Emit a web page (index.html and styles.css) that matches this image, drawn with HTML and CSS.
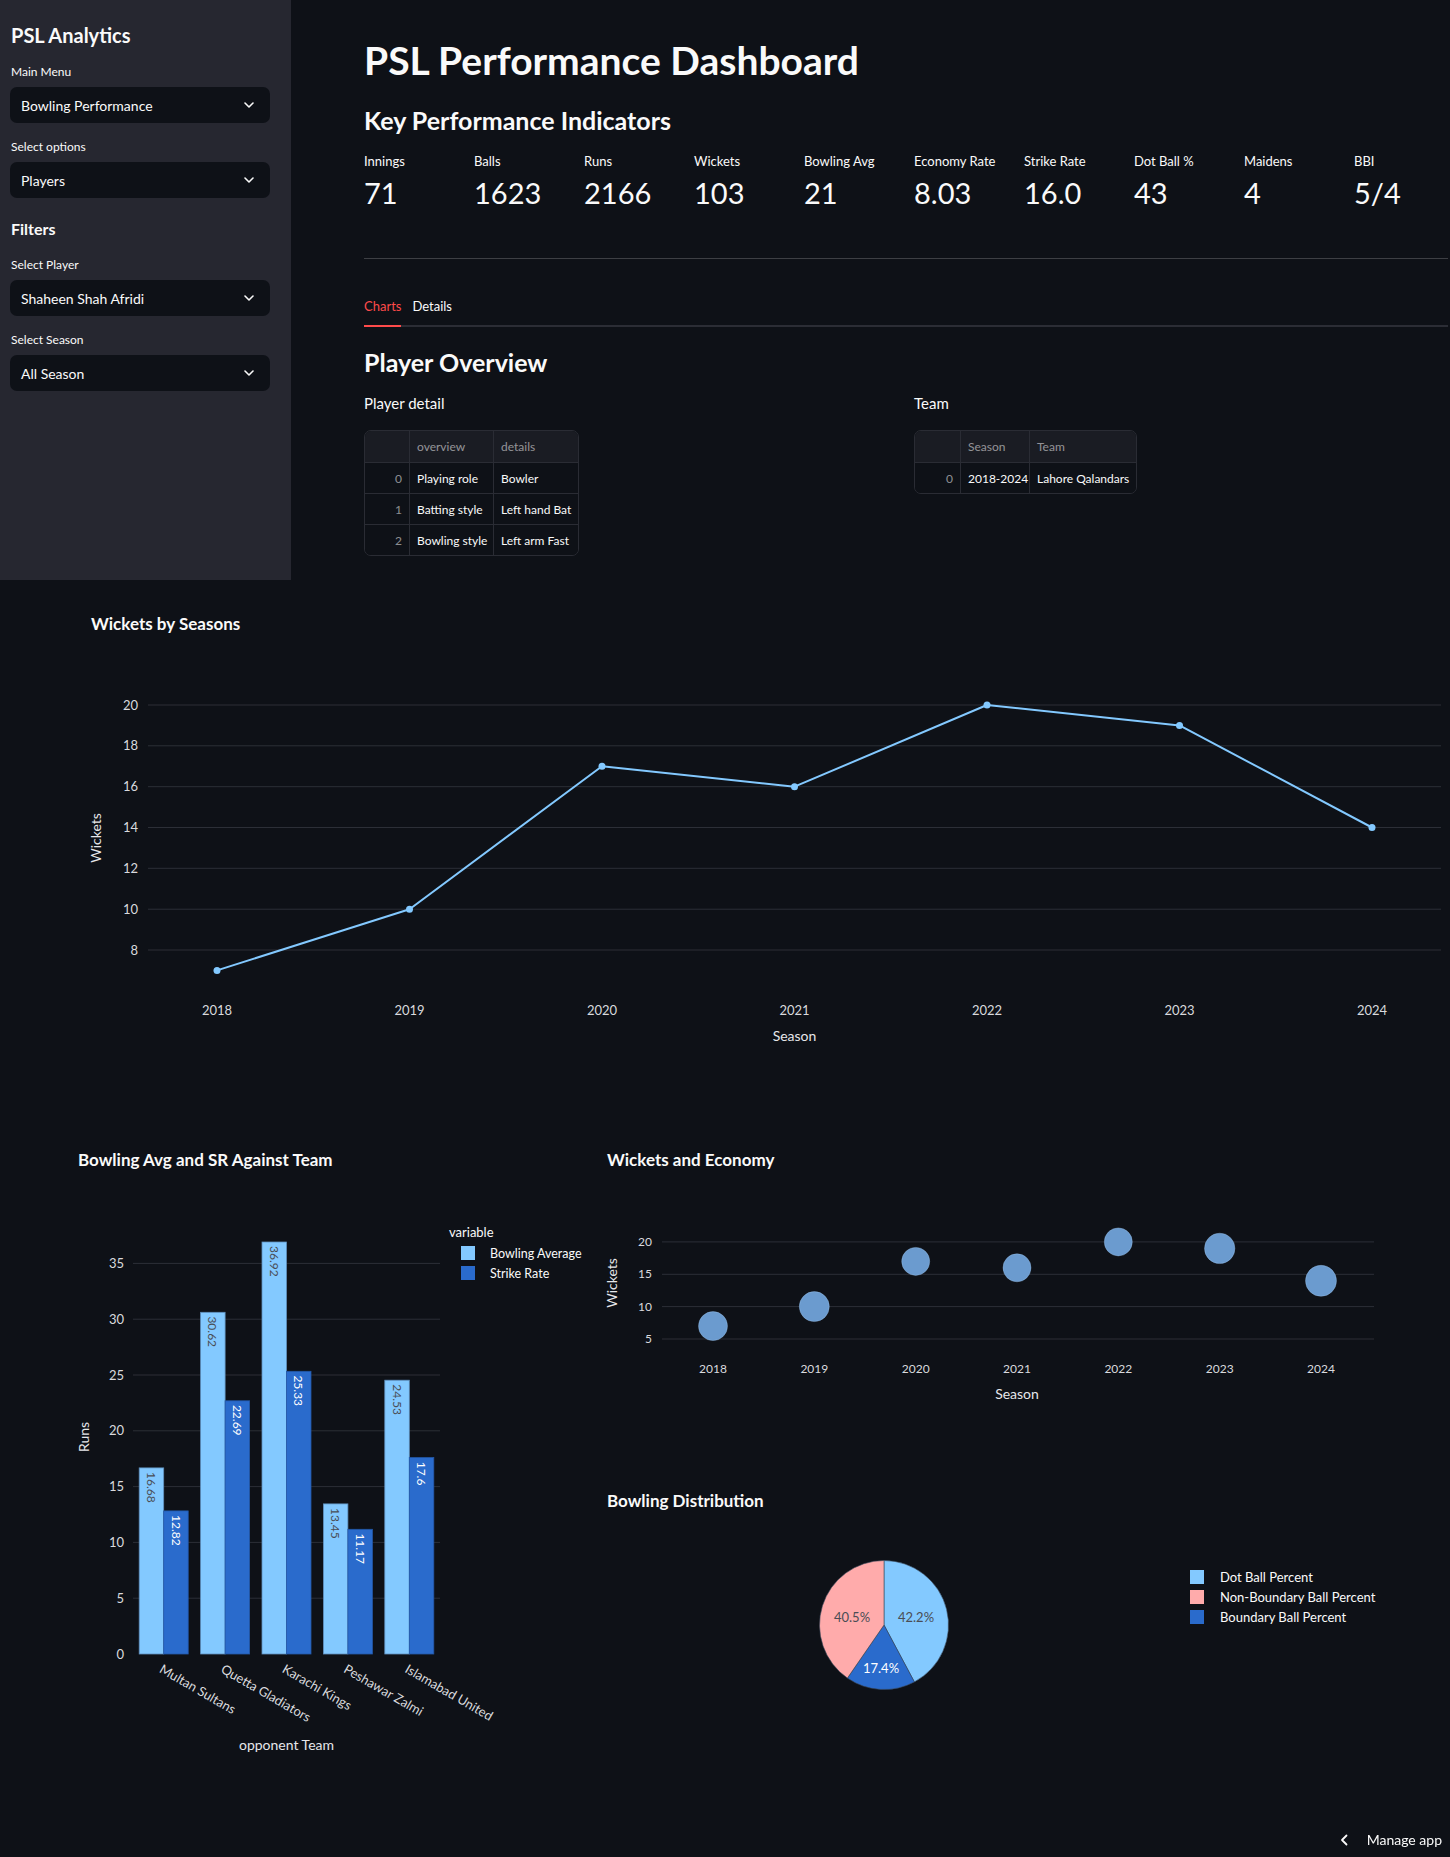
FILE: index.html
```html
<!DOCTYPE html>
<html lang="en">
<head>
<meta charset="utf-8">
<title>PSL Performance Dashboard</title>
<link rel="stylesheet" href="styles.css">
</head>
<body>
<div class="top">
  <aside class="sidebar">
    <h2 class="side-title">PSL Analytics</h2>
    <div class="field-label">Main Menu</div>
    <div class="select"><span>Bowling Performance</span><svg class="chev" viewBox="0 0 10 6" width="10" height="6"><path d="M1 1l4 4 4-4" fill="none" stroke="#fafafa" stroke-width="1.6" stroke-linecap="round" stroke-linejoin="round"/></svg></div>
    <div class="field-label">Select options</div>
    <div class="select"><span>Players</span><svg class="chev" viewBox="0 0 10 6" width="10" height="6"><path d="M1 1l4 4 4-4" fill="none" stroke="#fafafa" stroke-width="1.6" stroke-linecap="round" stroke-linejoin="round"/></svg></div>
    <h3 class="side-heading">Filters</h3>
    <div class="field-label">Select Player</div>
    <div class="select"><span>Shaheen Shah Afridi</span><svg class="chev" viewBox="0 0 10 6" width="10" height="6"><path d="M1 1l4 4 4-4" fill="none" stroke="#fafafa" stroke-width="1.6" stroke-linecap="round" stroke-linejoin="round"/></svg></div>
    <div class="field-label">Select Season</div>
    <div class="select"><span>All Season</span><svg class="chev" viewBox="0 0 10 6" width="10" height="6"><path d="M1 1l4 4 4-4" fill="none" stroke="#fafafa" stroke-width="1.6" stroke-linecap="round" stroke-linejoin="round"/></svg></div>
  </aside>
  <main class="main">
    <h1 class="page-title">PSL Performance Dashboard</h1>
    <h3 class="sub">Key Performance Indicators</h3>
    <div class="metrics">
      <div class="metric"><div class="m-label">Innings</div><div class="m-value">71</div></div>
      <div class="metric"><div class="m-label">Balls</div><div class="m-value">1623</div></div>
      <div class="metric"><div class="m-label">Runs</div><div class="m-value">2166</div></div>
      <div class="metric"><div class="m-label">Wickets</div><div class="m-value">103</div></div>
      <div class="metric"><div class="m-label">Bowling Avg</div><div class="m-value">21</div></div>
      <div class="metric"><div class="m-label">Economy Rate</div><div class="m-value">8.03</div></div>
      <div class="metric"><div class="m-label">Strike Rate</div><div class="m-value">16.0</div></div>
      <div class="metric"><div class="m-label">Dot Ball %</div><div class="m-value">43</div></div>
      <div class="metric"><div class="m-label">Maidens</div><div class="m-value">4</div></div>
      <div class="metric"><div class="m-label">BBI</div><div class="m-value">5/4</div></div>
    </div>
    <hr class="divider">
    <div class="tabs">
      <div class="tab active">Charts</div>
      <div class="tab">Details</div>
    </div>
    <h3 class="sub sub-overview">Player Overview</h3>
    <div class="cols">
      <div class="col">
        <div class="col-label">Player detail</div>
        <div class="df df-player">
          <div class="c h"></div><div class="c h">overview</div><div class="c h">details</div>
          <div class="c idx">0</div><div class="c">Playing role</div><div class="c">Bowler</div>
          <div class="c idx">1</div><div class="c">Batting style</div><div class="c">Left hand Bat</div>
          <div class="c idx last">2</div><div class="c last">Bowling style</div><div class="c last">Left arm Fast</div>
        </div>
      </div>
      <div class="col">
        <div class="col-label">Team</div>
        <div class="df df-team">
          <div class="c h"></div><div class="c h">Season</div><div class="c h">Team</div>
          <div class="c idx last">0</div><div class="c last">2018-2024</div><div class="c last">Lahore Qalandars</div>
        </div>
      </div>
    </div>
  </main>
</div>

<svg class="chart chart-line" width="1450" height="520" viewBox="0 580 1450 520">
  <text class="c-title" x="91" y="630">Wickets by Seasons</text>
  <g class="grid">
    <line x1="148" x2="1441" y1="705" y2="705"/>
    <line x1="148" x2="1441" y1="745.8" y2="745.8"/>
    <line x1="148" x2="1441" y1="786.7" y2="786.7"/>
    <line x1="148" x2="1441" y1="827.5" y2="827.5"/>
    <line x1="148" x2="1441" y1="868.3" y2="868.3"/>
    <line x1="148" x2="1441" y1="909.2" y2="909.2"/>
    <line x1="148" x2="1441" y1="950" y2="950"/>
  </g>
  <g class="tick ytick">
    <text x="138" y="709.5">20</text>
    <text x="138" y="750.3">18</text>
    <text x="138" y="791.2">16</text>
    <text x="138" y="832">14</text>
    <text x="138" y="872.8">12</text>
    <text x="138" y="913.7">10</text>
    <text x="138" y="954.5">8</text>
  </g>
  <g class="tick xtick">
    <text x="217" y="1014.5">2018</text>
    <text x="409.5" y="1014.5">2019</text>
    <text x="602" y="1014.5">2020</text>
    <text x="794.5" y="1014.5">2021</text>
    <text x="987" y="1014.5">2022</text>
    <text x="1179.5" y="1014.5">2023</text>
    <text x="1372" y="1014.5">2024</text>
  </g>
  <polyline class="line" points="217,970.4 409.5,909.2 602,766.3 794.5,786.7 987,705 1179.5,725.4 1372,827.5"/>
  <g class="dots">
    <circle cx="217" cy="970.4" r="3.5"/>
    <circle cx="409.5" cy="909.2" r="3.5"/>
    <circle cx="602" cy="766.3" r="3.5"/>
    <circle cx="794.5" cy="786.7" r="3.5"/>
    <circle cx="987" cy="705" r="3.5"/>
    <circle cx="1179.5" cy="725.4" r="3.5"/>
    <circle cx="1372" cy="827.5" r="3.5"/>
  </g>
  <text class="axis-title" x="794.5" y="1041">Season</text>
  <text class="axis-title" transform="translate(101 838) rotate(-90)">Wickets</text>
</svg>

<div class="lower">
  <svg class="chart chart-bar" width="580" height="757" viewBox="0 1100 580 757">
    <text class="c-title" x="78" y="1166">Bowling Avg and SR Against Team</text>
    <g class="grid">
      <line x1="133" x2="440" y1="1263.4" y2="1263.4"/>
      <line x1="133" x2="440" y1="1319.2" y2="1319.2"/>
      <line x1="133" x2="440" y1="1375" y2="1375"/>
      <line x1="133" x2="440" y1="1430.8" y2="1430.8"/>
      <line x1="133" x2="440" y1="1486.6" y2="1486.6"/>
      <line x1="133" x2="440" y1="1542.4" y2="1542.4"/>
      <line x1="133" x2="440" y1="1598.2" y2="1598.2"/>
    </g>
    <g class="tick ytick">
      <text x="124" y="1268">35</text>
      <text x="124" y="1323.7">30</text>
      <text x="124" y="1379.5">25</text>
      <text x="124" y="1435.3">20</text>
      <text x="124" y="1491.1">15</text>
      <text x="124" y="1546.9">10</text>
      <text x="124" y="1602.7">5</text>
      <text x="124" y="1658.5">0</text>
    </g>
    <g class="bars-light">
      <rect x="139.2" y="1467.9" width="24.5" height="186.1"/>
      <rect x="200.6" y="1312.3" width="24.5" height="341.7"/>
      <rect x="262" y="1242" width="24.5" height="412"/>
      <rect x="323.4" y="1503.9" width="24.5" height="150.1"/>
      <rect x="384.8" y="1380.2" width="24.5" height="273.8"/>
    </g>
    <g class="bars-dark">
      <rect x="163.7" y="1510.9" width="24.5" height="143.1"/>
      <rect x="225.1" y="1400.8" width="24.5" height="253.2"/>
      <rect x="286.5" y="1371.3" width="24.5" height="282.7"/>
      <rect x="347.9" y="1529.3" width="24.5" height="124.7"/>
      <rect x="409.3" y="1457.6" width="24.5" height="196.4"/>
    </g>
    <g class="bar-text dark-text">
      <text transform="translate(151.5 1472) rotate(90)">16.68</text>
      <text transform="translate(212.9 1316.4) rotate(90)">30.62</text>
      <text transform="translate(274.3 1246.1) rotate(90)">36.92</text>
      <text transform="translate(335.7 1508) rotate(90)">13.45</text>
      <text transform="translate(397.1 1384.3) rotate(90)">24.53</text>
    </g>
    <g class="bar-text light-text">
      <text transform="translate(176 1515) rotate(90)">12.82</text>
      <text transform="translate(237.4 1404.9) rotate(90)">22.69</text>
      <text transform="translate(298.8 1375.4) rotate(90)">25.33</text>
      <text transform="translate(360.2 1533.4) rotate(90)">11.17</text>
      <text transform="translate(421.6 1461.7) rotate(90)">17.6</text>
    </g>
    <g class="tick xcat">
      <text transform="translate(163 1664) rotate(30)" x="0" y="9">Multan Sultans</text>
      <text transform="translate(224.4 1664) rotate(30)" x="0" y="9">Quetta Gladiators</text>
      <text transform="translate(285.8 1664) rotate(30)" x="0" y="9">Karachi Kings</text>
      <text transform="translate(347.2 1664) rotate(30)" x="0" y="9">Peshawar Zalmi</text>
      <text transform="translate(408.6 1664) rotate(30)" x="0" y="9">Islamabad United</text>
    </g>
    <text class="axis-title" x="286.5" y="1750">opponent Team</text>
    <text class="axis-title" transform="translate(89 1437) rotate(-90)">Runs</text>
    <text class="legend-title" x="449" y="1237">variable</text>
    <rect class="sw-light" x="461" y="1246" width="14" height="14"/>
    <text class="legend-text narrow" x="490" y="1257.5">Bowling Average</text>
    <rect class="sw-dark" x="461" y="1266" width="14" height="14"/>
    <text class="legend-text narrow" x="490" y="1277.5">Strike Rate</text>
  </svg>

  <svg class="chart chart-right" width="870" height="757" viewBox="580 1100 870 757">
    <text class="c-title" x="607" y="1166">Wickets and Economy</text>
    <g class="grid">
      <line x1="662" x2="1374" y1="1241.9" y2="1241.9"/>
      <line x1="662" x2="1374" y1="1274.3" y2="1274.3"/>
      <line x1="662" x2="1374" y1="1306.6" y2="1306.6"/>
      <line x1="662" x2="1374" y1="1339" y2="1339"/>
    </g>
    <g class="tick ytick small">
      <text x="652" y="1246">20</text>
      <text x="652" y="1278.4">15</text>
      <text x="652" y="1310.7">10</text>
      <text x="652" y="1343.1">5</text>
    </g>
    <g class="bubbles">
      <circle cx="713" cy="1326.1" r="14.5"/>
      <circle cx="814.3" cy="1306.6" r="15"/>
      <circle cx="915.7" cy="1261.4" r="14"/>
      <circle cx="1017" cy="1267.8" r="14"/>
      <circle cx="1118.3" cy="1241.9" r="14"/>
      <circle cx="1219.7" cy="1248.4" r="15.2"/>
      <circle cx="1321" cy="1280.8" r="15.5"/>
    </g>
    <g class="tick xtick small">
      <text x="713" y="1372.5">2018</text>
      <text x="814.3" y="1372.5">2019</text>
      <text x="915.7" y="1372.5">2020</text>
      <text x="1017" y="1372.5">2021</text>
      <text x="1118.3" y="1372.5">2022</text>
      <text x="1219.7" y="1372.5">2023</text>
      <text x="1321" y="1372.5">2024</text>
    </g>
    <text class="axis-title" x="1017" y="1399">Season</text>
    <text class="axis-title" transform="translate(617 1283) rotate(-90)">Wickets</text>

    <text class="c-title" x="607" y="1507">Bowling Distribution</text>
    <g class="pie">
      <path class="p-light" d="M884 1625 L884 1560.5 A64.5 64.5 0 0 1 914.4 1681.9 Z"/>
      <path class="p-dark" d="M884 1625 L914.4 1681.9 A64.5 64.5 0 0 1 847.4 1678.1 Z"/>
      <path class="p-pink" d="M884 1625 L847.4 1678.1 A64.5 64.5 0 0 1 884 1560.5 Z"/>
    </g>
    <text class="pie-label dark-text" x="916" y="1621.5">42.2%</text>
    <text class="pie-label dark-text" x="852" y="1621.5">40.5%</text>
    <text class="pie-label light-text" x="881" y="1672.5">17.4%</text>
    <rect class="sw-light" x="1190" y="1570" width="14" height="14"/>
    <text class="legend-text" x="1220" y="1581.5">Dot Ball Percent</text>
    <rect class="sw-pink" x="1190" y="1590" width="14" height="14"/>
    <text class="legend-text" x="1220" y="1601.5">Non-Boundary Ball Percent</text>
    <rect class="sw-dark" x="1190" y="1610" width="14" height="14"/>
    <text class="legend-text" x="1220" y="1621.5">Boundary Ball Percent</text>
  </svg>
</div>

<div class="manage">
  <svg class="manage-chev" width="8" height="12" viewBox="0 0 8 12"><path d="M6.5 1.5L2 6l4.5 4.5" fill="none" stroke="#fafafa" stroke-width="1.8" stroke-linecap="round" stroke-linejoin="round"/></svg>
  <span>Manage app</span>
</div>
</body>
</html>
```

FILE: styles.css
```css
* { box-sizing: border-box; }

html, body {
  margin: 0;
  padding: 0;
  background: #0e1117;
}

body {
  width: 1450px;
  height: 1857px;
  overflow: hidden;
  font-family: Lato, "Noto Sans", sans-serif;
  color: #fafafa;
}

/* ---------- top area ---------- */
.top {
  display: flex;
  height: 580px;
}

.sidebar {
  width: 291px;
  flex: none;
  background: #262730;
  padding: 23px 21px 0 10px;
}

.side-title {
  margin: 0 0 17px 1px;
  font-size: 20px;
  line-height: 24px;
  font-weight: 700;
}

.field-label {
  margin: 0 0 7px 1px;
  font-size: 12px;
  line-height: 16px;
}

.select {
  height: 36px;
  margin-bottom: 16px;
  padding: 0 16px 0 11px;
  display: flex;
  align-items: center;
  justify-content: space-between;
  background: #0e1117;
  border-radius: 7px;
  font-size: 14px;
}

.side-heading {
  margin: 20px 0 17px 1px;
  font-size: 16px;
  line-height: 22px;
  font-weight: 700;
}

.main {
  flex: 1;
  padding: 36px 2px 0 73px;
}

.page-title {
  margin: 0;
  font-size: 39px;
  line-height: 48px;
  font-weight: 700;
}

.sub {
  margin: 20px 0 0;
  font-size: 25px;
  line-height: 32px;
  font-weight: 700;
}

.metrics {
  margin-top: 16px;
  display: grid;
  grid-template-columns: repeat(10, 1fr);
  column-gap: 16px;
}

.m-label {
  font-size: 13px;
  line-height: 18px;
}

.m-value {
  margin-top: 5px;
  font-size: 29px;
  line-height: 36px;
}

.divider {
  margin: 47px 0 0;
  border: 0;
  height: 1px;
  background: rgba(250, 250, 250, 0.2);
}

.tabs {
  margin-top: 38px;
  display: flex;
  gap: 11px;
  border-bottom: 2px solid #2b2d35;
}

.tab {
  font-size: 13px;
  line-height: 18px;
  padding-bottom: 10px;
}

.tab.active {
  color: #ff4b4b;
  border-bottom: 2px solid #ff4b4b;
  margin-bottom: -2px;
}

.sub-overview {
  margin-top: 19px;
}

.cols {
  margin-top: 15px;
  display: grid;
  grid-template-columns: 1fr 1fr;
  column-gap: 16px;
}

.col-label {
  font-size: 15px;
  line-height: 20px;
  margin-bottom: 17px;
}

/* ---------- dataframes ---------- */
.df {
  display: inline-grid;
  border: 1px solid #2a2c34;
  border-radius: 7px;
  overflow: hidden;
  font-size: 12px;
}

.df-player { grid-template-columns: 45px 84px 84px; }
.df-team { grid-template-columns: 46px 69px 106px; }

.c {
  height: 31px;
  padding: 0 7px;
  display: flex;
  align-items: center;
  white-space: nowrap;
  border-right: 1px solid #2a2c34;
  border-bottom: 1px solid #2a2c34;
  background: #0e1117;
}

.c:nth-child(3n) { border-right: 0; }

.c.h {
  height: 32px;
  background: #1a1c23;
  color: rgba(250, 250, 250, 0.55);
}

.c.idx {
  justify-content: flex-end;
  color: rgba(250, 250, 250, 0.55);
}

.c.last {
  border-bottom: 0;
  height: 30px;
}

/* ---------- charts ---------- */
.chart {
  display: block;
  overflow: visible;
  font-family: Lato, "Noto Sans", sans-serif;
}

.lower {
  display: flex;
}

.c-title {
  font-size: 17px;
  font-weight: 700;
  fill: #fafafa;
}

.grid line {
  stroke: #2c2f37;
  stroke-width: 1;
}

.tick text {
  font-size: 13px;
  fill: #d9dade;
}

.tick.small text {
  font-size: 12px;
}

.ytick text { text-anchor: end; }
.xtick text { text-anchor: middle; }
.xcat text { text-anchor: start; }

.axis-title {
  font-size: 14px;
  fill: #e6e7ea;
  text-anchor: middle;
}

.line {
  fill: none;
  stroke: #83c9ff;
  stroke-width: 2;
  stroke-linejoin: round;
}

.dots circle { fill: #83c9ff; }

.bars-light rect {
  fill: #83c9ff;
  stroke: #5f8fbd;
  stroke-width: 0.8;
}

.bars-dark rect {
  fill: #2a6bcc;
  stroke: #2358a8;
  stroke-width: 0.8;
}

.bar-text text {
  font-size: 12px;
  dominant-baseline: central;
  text-anchor: start;
}

.dark-text { fill: #4a4d55; }
.light-text { fill: #ffffff; }

.legend-title,
.legend-text {
  font-size: 13px;
  fill: #fafafa;
}

.legend-text.narrow {
  font-size: 12.5px;
}

.sw-light { fill: #83c9ff; }
.sw-dark { fill: #2a6bcc; }
.sw-pink { fill: #ffabab; }

.bubbles circle {
  fill: #6b9bcf;
  stroke: rgba(160, 200, 240, 0.35);
  stroke-width: 1;
}

.p-light { fill: #83c9ff; }
.p-dark { fill: #2a6bcc; }
.p-pink { fill: #ffabab; }

.pie path {
  stroke: #3b4a5c;
  stroke-width: 0.6;
}

.pie-label {
  font-size: 13px;
  text-anchor: middle;
}

text.dark-text { fill: #4a4d55; }
text.light-text { fill: #ffffff; }

/* ---------- manage app badge ---------- */
.manage {
  position: fixed;
  right: 8px;
  bottom: 7px;
  display: flex;
  align-items: center;
  gap: 19px;
  font-size: 14px;
  line-height: 20px;
  color: #fafafa;
}
```
